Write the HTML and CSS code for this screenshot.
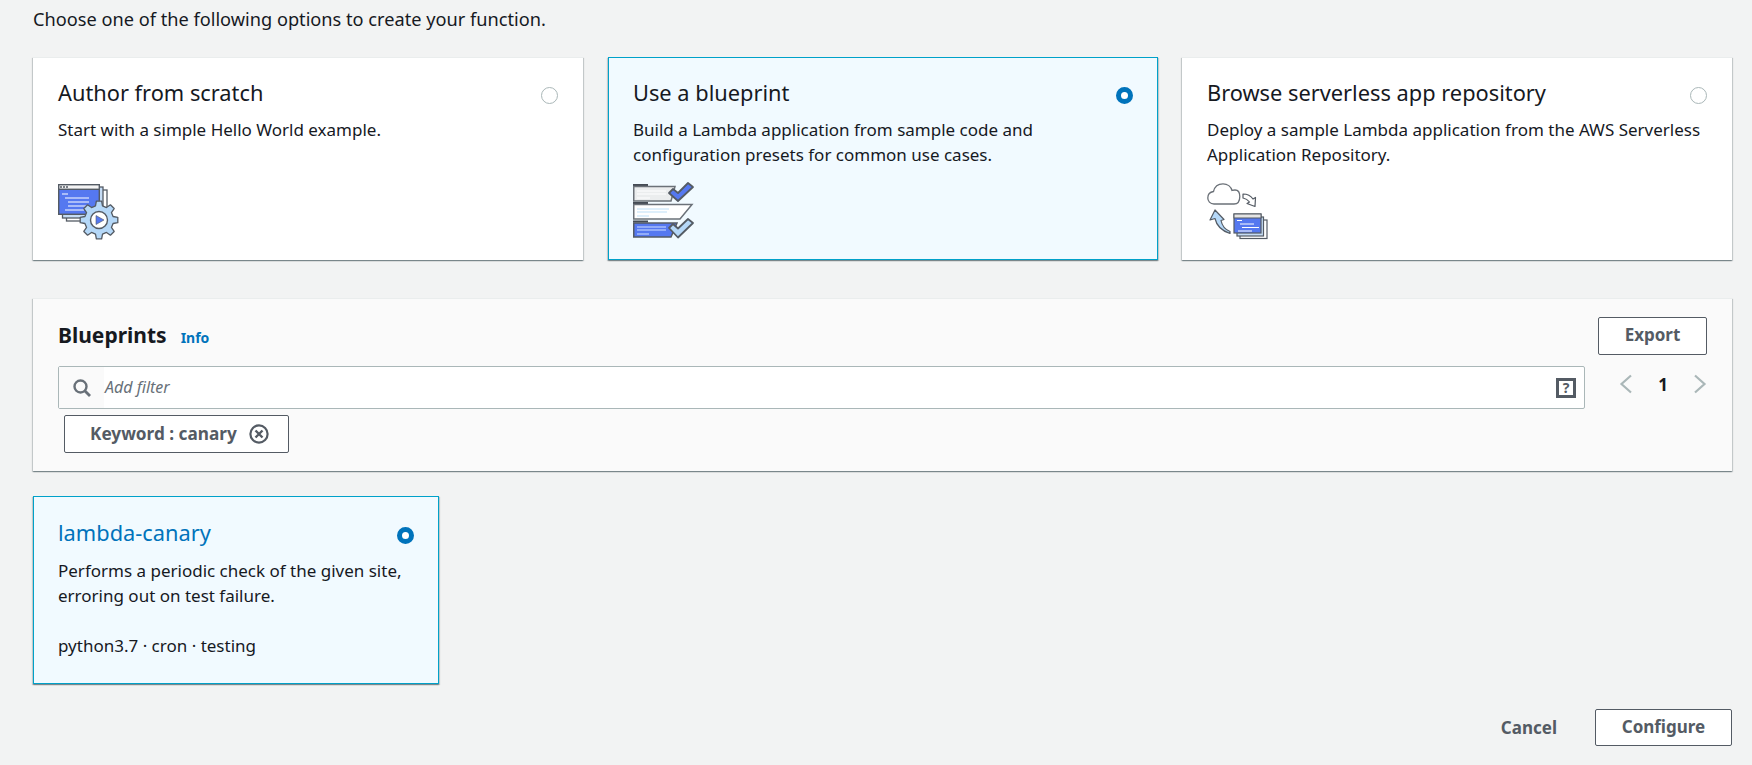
FILE: index.html
```html
<!DOCTYPE html>
<html lang="en">
<head>
<meta charset="utf-8">
<title>Create function</title>
<link rel="stylesheet" href="styles.css">
</head>
<body>
<main class="page">
  <p class="intro">Choose one of the following options to create your function.</p>
  <section class="options">
    <article class="card">
      <div class="card-head"><h2>Author from scratch</h2><span class="radio"></span></div>
      <p class="card-desc">Start with a simple Hello World example.</p>
      <svg class="art art-scratch" width="62" height="62" viewBox="0 0 62 62">
        <rect x="8.500" y="6" width="40.500" height="31" fill="#fff" stroke="#545b64" stroke-width="1.300"/>
        <rect x="4.500" y="3" width="40.500" height="31" fill="#c5dcf5" stroke="#545b64" stroke-width="1.300"/>
        <rect x="0.700" y="0.700" width="40.600" height="29.600" fill="#5578f0" stroke="#545b64" stroke-width="1.400"/>
        <rect x="0.700" y="0.700" width="40.600" height="4.600" fill="#f4f4f4" stroke="#545b64" stroke-width="1.400"/>
        <path d="M2 3h2M5 3h2M8 3h2" stroke="#545b64" stroke-width="1.600"/>
        <path d="M4 10h6M7 14h24M10 18h21M10 22h21M7 26h19" stroke="#fff" stroke-width="1.200"/>
        <polygon transform="translate(41 36)" points="14.070,-3.510 18.810,-2.640 18.810,2.640 14.070,3.510 12.430,7.470 15.170,11.430 11.430,15.170 7.470,12.430 3.510,14.070 2.640,18.810 -2.640,18.810 -3.510,14.070 -7.470,12.430 -11.430,15.170 -15.170,11.430 -12.430,7.470 -14.070,3.510 -18.810,2.640 -18.810,-2.640 -14.070,-3.510 -12.430,-7.470 -15.170,-11.430 -11.430,-15.170 -7.470,-12.430 -3.510,-14.070 -2.640,-18.810 2.640,-18.810 3.510,-14.070 7.470,-12.430 11.430,-15.170 15.170,-11.430 12.430,-7.470" fill="#b5d8f8" stroke="#545b64" stroke-width="1.300" stroke-linejoin="round"/>
        <circle cx="41" cy="36" r="8.500" fill="#fff" stroke="#545b64" stroke-width="1.400"/>
        <path d="M38 31.500l8 4.500-8 4.500z" fill="#5578f0" stroke="#545b64" stroke-width=".6"/>
      </svg>
    </article>
    <article class="card card-on">
      <div class="card-head"><h2>Use a blueprint</h2><span class="radio radio-on"></span></div>
      <p class="card-desc">Build a Lambda application from sample code and<br>configuration presets for common use cases.</p>
      <svg class="art art-blue" width="62" height="56" viewBox="0 0 62 56">
        <path d="M0 1h15M0 19h15M0 37.500h15" stroke="#444b54" stroke-width="2"/>
        <path d="M.75 2.500H42L38 17H.75z" fill="#ebedee" stroke="#6b7178" stroke-width="1.500"/>
        <path d="M4 7h29M4 10h29M4 14h13" stroke="#fff" stroke-width="1.200"/>
        <path d="M.75 20.500H59L47 35H.75z" fill="#fff" stroke="#6b7178" stroke-width="1.500"/>
        <path d="M4 25h32M4 28h30M4 32h12" stroke="#bde0f8" stroke-width="1.200"/>
        <path d="M.75 39H44L38 53H.75z" fill="#5578f0" stroke="#545b64" stroke-width="1.500"/>
        <path d="M4 43h29M4 46h29M4 50h12" stroke="#cfe0ff" stroke-width="1.200"/>
        <path d="M36 9l9 8L60 3l-5-4-10 10-5-4z" fill="#5578f0" stroke="#545b64" stroke-width="1.800" stroke-linejoin="round"/>
        <path d="M36 44l9 9.500L60 39l-5-4-10 9.500-5-4.500z" fill="#b5d8f8" stroke="#545b64" stroke-width="1.800" stroke-linejoin="round"/>
      </svg>
    </article>
    <article class="card">
      <div class="card-head"><h2>Browse serverless app repository</h2><span class="radio"></span></div>
      <p class="card-desc">Deploy a sample Lambda application from the AWS Serverless<br>Application Repository.</p>
      <svg class="art art-repo" width="62" height="60" viewBox="0 0 62 60">
        <path d="M7 21C3 21 .8 18 .8 15c0-3.500 2.500-6 5.700-6.500C7.500 4 11 .8 16 .8c4.500 0 8 3 9 6.700 1-.4 2-.5 3-.5 3.500 0 4.800 3 4.800 6.500 0 4-1.500 7.500-5.800 7.500z" fill="#fff" stroke="#6b7178" stroke-width="1.300"/>
        <path d="M36 11c5 0 8 2 10 5l2.500-1.500-.5 9-8-3 2.500-1.500c-2-2.500-4-3.500-6.500-4z" fill="#fff" stroke="#545b64" stroke-width="1.200" stroke-linejoin="round"/>
        <path d="M8 27L3 37l5-1.500c1.500 7 6 12 15 15v-2c-5-2-8-6-9-11l3-1z" fill="#b5d8f8" stroke="#545b64" stroke-width="1.200" stroke-linejoin="round"/>
        <rect x="33" y="37" width="27" height="18.500" fill="#fff" stroke="#545b64" stroke-width="1.200"/>
        <rect x="30" y="34" width="26.500" height="19" fill="#c5dcf5" stroke="#545b64" stroke-width="1.200"/>
        <rect x="27" y="31" width="27" height="19" fill="#5578f0" stroke="#545b64" stroke-width="1.200"/>
        <rect x="27" y="31" width="27" height="4" fill="#e4e4e4" stroke="#545b64" stroke-width="1"/>
        <path d="M30 37.500h5M33 41h14M35 44.500h17M31 48h14" stroke="#fff" stroke-width="1"/>
      </svg>
    </article>
  </section>
  <section class="panel">
    <div class="panel-top">
      <div class="panel-title"><h2>Blueprints</h2><a class="info">Info</a></div>
      <button class="btn btn-export">Export</button>
    </div>
    <div class="filter-row">
      <div class="filter">
        <span class="filter-icon">
          <svg width="20" height="20" viewBox="0 0 20 20"><circle cx="8.500" cy="8.500" r="6" fill="none" stroke="#687078" stroke-width="2.400"/><path d="M13 13l5 5" stroke="#687078" stroke-width="2.800"/></svg>
        </span>
        <span class="filter-input">Add filter</span>
        <span class="filter-help">?</span>
      </div>
      <nav class="pager">
        <svg width="14" height="20" viewBox="0 0 14 20"><path d="M12 1.500L2.500 10l9.500 8.500" fill="none" stroke="#aab7b8" stroke-width="2.200"/></svg>
        <span class="pager-num">1</span>
        <svg width="14" height="20" viewBox="0 0 14 20"><path d="M2 1.500L11.500 10 2 18.500" fill="none" stroke="#aab7b8" stroke-width="2.200"/></svg>
      </nav>
    </div>
    <div class="chip"><span>Keyword : canary</span>
      <svg width="20" height="20" viewBox="0 0 20 20"><circle cx="10" cy="10" r="8.600" fill="none" stroke="#545b64" stroke-width="2.200"/><path d="M6.500 6.500l7 7M13.500 6.500l-7 7" stroke="#545b64" stroke-width="2.400"/></svg>
    </div>
  </section>
  <article class="card card-on result">
    <div class="card-head"><h2 class="result-title">lambda-canary</h2><span class="radio radio-on"></span></div>
    <p class="card-desc">Performs a periodic check of the given site,<br>erroring out on test failure.</p>
    <p class="card-desc result-tags">python3.7 · cron · testing</p>
  </article>
  <footer class="actions">
    <a class="cancel">Cancel</a>
    <button class="btn btn-configure">Configure</button>
  </footer>
</main>
</body>
</html>
```
FILE: styles.css
```css
* { box-sizing: border-box; }
html, body { margin: 0; padding: 0; }
body {
  background: #f2f3f3;
  color: #16191f;
  font-family: "Noto Sans", "Open Sans", sans-serif;
  font-size: 17px;
  height: 765px;
  overflow: hidden;
}
.page { padding: 8px 20px 0 33px; }
.intro { margin: 0 0 26px; line-height: 23px; font-size: 18.200px; }
p, h2 { margin: 0; font-weight: 400; }
.options { display: flex; gap: 24px; margin-bottom: 38px; }
.card {
  flex: 1 1 0;
  background: #fff;
  height: 203px;
  padding: 22px 24px 20px 25px;
  box-shadow: 0 1px 1px 0 rgba(0, 28, 36, .3), 1px 1px 1px 0 rgba(0, 28, 36, .15), -1px 1px 1px 0 rgba(0, 28, 36, .15);
  border-top: 1px solid #eaeded;
  position: relative;
}
.card-on {
  background: #f1faff;
  border: 1px solid #00a1c9;
  padding: 22px 23px 19px 24px;
  margin-left: 1px;
}
.card-head { display: flex; justify-content: space-between; align-items: center; height: 26px; }
.card-head h2 { font-size: 21.800px; line-height: 26px; }
.card-desc { margin-top: 11px; line-height: 25px; }
.radio {
  width: 17px; height: 17px;
  border-radius: 50%;
  border: 1.500px solid #aab7b8;
  background: #fff;
  flex: none;
  margin-right: 1px;
  position: relative;
  top: 2px;
}
.radio-on { border: 5px solid #0073bb; }
.art { position: absolute; left: 25px; display: block; overflow: visible; }
.art-scratch { top: 126px; }
.art-blue { top: 126px; left: 24px; }
.art-repo { top: 125px; }
.panel {
  background: #fafafa;
  height: 173px;
  padding: 18px 25px 0 25px;
  margin-bottom: 25px;
  box-shadow: 0 1px 1px 0 rgba(0, 28, 36, .3), 1px 1px 1px 0 rgba(0, 28, 36, .15), -1px 1px 1px 0 rgba(0, 28, 36, .15);
  border-top: 1px solid #eaeded;
}
.panel-top { display: flex; justify-content: space-between; align-items: flex-start; height: 49px; }
.panel-title { display: flex; align-items: baseline; gap: 14px; line-height: 36px; }
.panel-title h2 { font-size: 21px; font-weight: 700; }
.info { color: #0073bb; font-size: 14px; font-weight: 700; }
.btn {
  background: #fff;
  border: 1px solid #545b64;
  border-radius: 2px;
  color: #545b64;
  font: 700 17px "Noto Sans", "Open Sans", sans-serif;
  padding: 0 0 3px;
}
.btn-export { width: 109px; height: 38px; }
.filter-row { display: flex; justify-content: space-between; }
.filter {
  width: 1527px;
  height: 43px;
  border: 1px solid #aab7b8;
  border-radius: 2px;
  background: #fff;
  display: flex;
  align-items: center;
}
.filter-icon {
  width: 45px; height: 41px;
  background: #fafafa;
  display: flex; align-items: center; justify-content: center;
  flex: none;
}
.filter-input { flex: 1; font-style: italic; font-size: 16px; color: #687078; padding: 0 0 2px 1px; }
.filter-help {
  width: 20px; height: 20px;
  border: 3px solid #545b64;
  color: #545b64;
  font-size: 14px; font-weight: 700; line-height: 14px;
  text-align: center;
  margin-right: 8px;
}
.pager { display: flex; align-items: center; width: 88px; height: 36px; justify-content: space-between; margin-top: 0; }
.pager-num { font-weight: 700; font-size: 17px; }
.chip {
  margin: 6px 0 0 6px;
  width: 225px; height: 38px;
  border: 1px solid #545b64;
  border-radius: 2px;
  background: #fff;
  color: #545b64;
  font-weight: 700;
  font-size: 17.200px;
  display: flex; align-items: center;
  padding: 0 0 2px 25px;
  gap: 12px;
}
.chip svg { position: relative; top: 1px; }
.result { flex: none; width: 406px; height: 188px; margin: 0 0 25px; padding: 23px 23px 19px 24px; }
.result-title { color: #0073bb; }
.result > .card-desc { margin-top: 12px; }
.result > .result-tags { margin-top: 25px; }
.actions { display: flex; justify-content: flex-end; align-items: center; gap: 38px; }
.cancel { color: #545b64; font-weight: 700; }
.btn-configure { width: 137px; height: 37px; }
```
